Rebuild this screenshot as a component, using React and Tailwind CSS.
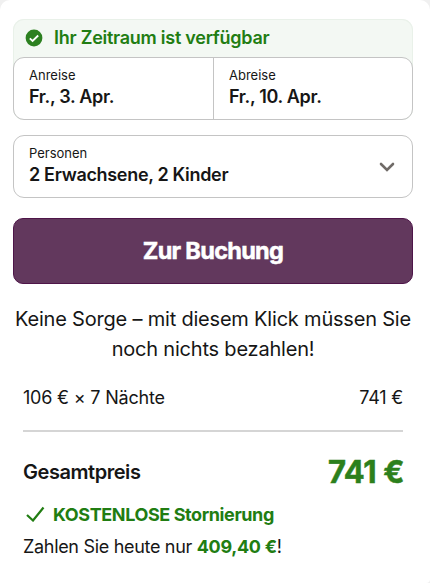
function Field({ label, value, className = "" }) {
  return (
    <div className={`flex flex-col pl-[15px] pt-[8px] ${className}`}>
      <span className="text-[13px] leading-[19px]">{label}</span>
      <span className="text-[18px] font-semibold leading-[23px] tracking-[-0.32px] whitespace-nowrap">{value}</span>
    </div>
  );
}

export default function App() {
  return (
    <div className="h-[583px] w-[430px] overflow-hidden bg-[#f0f0f0] font-['Inter',sans-serif] text-[#161616]">
      <main className="flex h-[583px] flex-col rounded-t-[10px] rounded-br-[4px] bg-white pl-[13px] pr-[17px] pt-[19px]">
        <section className="rounded-[11px] bg-[#f3f8f3] shadow-[inset_0_0_0_1px_#e9f1e9]">
          <div className="flex h-[38px] items-center gap-[11px] pl-[12px] text-[18px] font-semibold tracking-[-0.26px] text-[#217d12]">
            <svg className="size-[18px]" viewBox="0 0 18 18" fill="none">
              <circle cx="9" cy="9" r="8.4" fill="#2c8020" />
              <path d="M4.8 9.3 7.6 12 13.2 6.5" stroke="white" strokeWidth="1.8" />
            </svg>
            <span className="-mt-px">Ihr Zeitraum ist verfügbar</span>
          </div>
          <div className="grid h-[63px] grid-cols-[200px_1fr] rounded-[11px] border border-[#c4c4c4] bg-white">
            <Field label="Anreise" value="Fr., 3. Apr." className="border-r border-[#c4c4c4]" />
            <Field label="Abreise" value="Fr., 10. Apr." />
          </div>
        </section>

        <section className="mt-[15px] flex h-[63px] items-center justify-between rounded-[11px] border border-[#c4c4c4] pr-[17px]">
          <Field label="Personen" value="2 Erwachsene, 2 Kinder" className="h-full" />
          <svg className="h-[10px] w-[16px]" viewBox="0 0 16 10" fill="none">
            <path d="m2 2 6 6 6-6" stroke="#706b68" strokeWidth="2.6" strokeLinecap="round" />
          </svg>
        </section>

        <button className="mt-[20px] h-[66px] shrink-0 rounded-[10px] border border-[#4e1549] bg-[#62385d] text-[23.5px] font-bold tracking-[-0.7px] text-white [-webkit-text-stroke:0.5px_white]">
          Zur Buchung
        </button>

        <p className="-mx-1 mt-[20px] text-center text-[20px] leading-[30px] tracking-[-0.2px]">
          Keine Sorge – mit diesem Klick müssen Sie<br />noch nichts bezahlen!
        </p>

        <div className="mx-[10px] mt-[20px] flex h-[48px] items-start justify-between border-b-2 border-[#d5d5d5] text-[18px] leading-[27px] tracking-[-0.2px]">
          <span>106 € × 7 Nächte</span>
          <span>741 €</span>
        </div>

        <div className="mx-[10px] mt-[20px] flex h-[40px] items-center justify-between">
          <span className="text-[20px] font-semibold tracking-[-0.45px]">Gesamtpreis</span>
          <span className="-mr-px text-[31px] font-bold tracking-[-0.4px] text-[#2c801c] [-webkit-text-stroke:0.5px_#2c801c]">741 €</span>
        </div>

        <div className="mx-[10px] mt-[7px] flex h-[30px] items-center gap-[8px] text-[18px] font-bold tracking-[-0.4px] text-[#217d12]">
          <svg className="ml-[3px] h-[16px] w-[19px]" viewBox="0 0 19 16" fill="none">
            <path d="m1 9 6 5.5L17.5 1.5" stroke="currentColor" strokeWidth="2.2" />
          </svg>
          <span>KOSTENLOSE Stornierung</span>
        </div>
        <p className="mx-[10px] mt-[4px] text-[18px] leading-[27px] tracking-[-0.31px]">
          Zahlen Sie heute nur <strong className="font-bold text-[#217d12]">409,40 €</strong>!
        </p>
      </main>
    </div>
  );
}
